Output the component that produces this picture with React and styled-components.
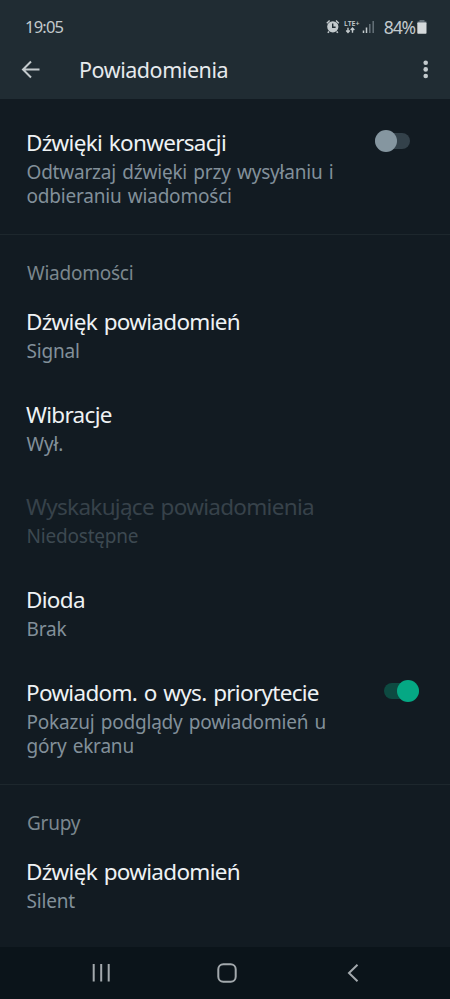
import styled, { createGlobalStyle } from "styled-components";

const GlobalStyle = createGlobalStyle`
  body {
    margin: 0;
    background-color: #121b22;
    font-family: "Noto Sans", sans-serif;
  }
`;

const Screen = styled.div`
  width: 450px;
  height: 999px;
  display: flex;
  flex-direction: column;
  overflow: hidden;
  background-color: #121b22;
`;

const Header = styled.div`
  height: 99px;
  background-color: #202c33;
`;

const StatusBar = styled.div`
  display: flex;
  align-items: center;
  height: 41px;
  padding: 13px 23px 0 25px;
  box-sizing: border-box;
  color: #c3cacd;
`;

const Clock = styled.div`
  flex: 1;
  font-size: 16.5px;
  line-height: 28px;
  letter-spacing: -0.8px;
`;

const Battery = styled.div`
  margin-left: 8px;
  margin-right: 2px;
  font-size: 17.5px;
  line-height: 28px;
  letter-spacing: -1.1px;
`;

const Toolbar = styled.div`
  display: flex;
  align-items: center;
  height: 58px;
  padding: 0 16px 0 20px;
`;

const PageTitle = styled.div`
  flex: 1;
  padding-left: 36px;
  color: #e6eaed;
  font-size: 21.5px;
  line-height: 30px;
  letter-spacing: -0.45px;
`;

const Content = styled.div`
  flex: 1;
`;

const Section = styled.div`
  padding-top: ${(props) => (props.$first ? "10px" : "0")};
  padding-bottom: 8px;
  border-bottom: 1px solid #1d272d;
`;

const SectionTitle = styled.div`
  padding: 26px 27px 3px;
  color: #7b878e;
  font-size: 19px;
  line-height: 24px;
  letter-spacing: -0.25px;
`;

const Item = styled.div`
  display: flex;
  justify-content: space-between;
  padding: 19px 27px 17.8px 26px;
`;

const ItemTitle = styled.div`
  color: ${(props) => (props.$disabled ? "#37424a" : "#eef2f4")};
  font-size: 22.5px;
  line-height: 30px;
  letter-spacing: -0.7px;
  word-spacing: 1.5px;
  white-space: nowrap;
`;

const ItemText = styled.div`
  margin-top: 2px;
  padding-left: 0.5px;
  color: ${(props) => (props.$disabled ? "#3d4951" : "#82909a")};
  font-size: 19px;
  line-height: 24px;
  letter-spacing: -0.2px;
  word-spacing: 1.5px;
  white-space: nowrap;
`;

const Switch = styled.div`
  display: flex;
  align-items: center;
  justify-content: ${(props) => (props.$on ? "flex-end" : "flex-start")};
  width: 35px;
  height: 16px;
  margin-top: 5px;
  margin-right: ${(props) => (props.$on ? "4px" : "13px")};
  border-radius: 8px;
  background-color: ${(props) => (props.$on ? "#0d4a41" : "#33414a")};
`;

const Knob = styled.div`
  flex-shrink: 0;
  width: 22px;
  height: 22px;
  border-radius: 50%;
  background-color: ${(props) => (props.$on ? "#05a884" : "#8596a0")};
`;

const NavBar = styled.div`
  display: flex;
  align-items: center;
  height: 52px;
  background-color: #0b141a;
`;

function StatusIcons() {
  return (
    <svg width="50" height="16" viewBox="0 0 50 16">
      <g fill="none" stroke="#c3cacd">
        <path d="M0.8 4.2L3.6 1.4M10 1.4L12.8 4.2" strokeWidth="1.4" />
        <path d="M3 12.5L1.8 13.8M10.6 12.5L11.8 13.8" strokeWidth="1.6" />
      </g>
      <circle cx="6.8" cy="7.8" r="5.6" fill="#c3cacd" />
      <path
        d="M6.7 4.6V8.3H9.6"
        fill="none"
        stroke="#202c33"
        strokeWidth="1.4"
      />
      <text
        x="18"
        y="6.5"
        fill="#c3cacd"
        fontSize="7.2"
        fontWeight="600"
        textLength="15.5"
        lengthAdjust="spacingAndGlyphs"
      >
        LTE+
      </text>
      <path
        d="M22 8.8V13.4M20.2 11.6L22 13.5L23.8 11.6M26.5 13.8V9.2M24.7 11L26.5 9.1L28.3 11"
        fill="none"
        stroke="#c3cacd"
        strokeWidth="1.4"
      />
      <path d="M37.5 11.5V14M40.5 8.5V14" stroke="#c3cacd" strokeWidth="1.5" />
      <path
        d="M43.8 5V14M47.2 2V14"
        stroke="#66727a"
        strokeWidth="1.5"
      />
    </svg>
  );
}

function Toggle({ on }) {
  return (
    <Switch $on={on}>
      <Knob $on={on} />
    </Switch>
  );
}

function Setting({ title, text, disabled, children }) {
  return (
    <Item>
      <div>
        <ItemTitle $disabled={disabled}>{title}</ItemTitle>
        <ItemText $disabled={disabled}>{text}</ItemText>
      </div>
      {children}
    </Item>
  );
}

export default function App() {
  return (
    <Screen>
      <GlobalStyle />
      <Header>
        <StatusBar>
          <Clock>19:05</Clock>
          <StatusIcons />
          <Battery>84%</Battery>
          <svg width="10" height="14" viewBox="0 0 10 14">
            <path d="M2.5 0H7.5V1.5H9.5V3H0.5V1.5H2.5Z" fill="#66727a" />
            <rect x="0.3" y="2.5" width="9.2" height="11.2" rx="0.8" fill="#d5dadc" />
          </svg>
        </StatusBar>
        <Toolbar>
          <svg width="23" height="20" viewBox="0 0 23 20">
            <path
              d="M19.5 9.5H3M11 1.5L3 9.5L11 17.5"
              fill="none"
              stroke="#c3cacd"
              strokeWidth="2"
            />
          </svg>
          <PageTitle>Powiadomienia</PageTitle>
          <svg width="18" height="20" viewBox="0 0 18 20" fill="#c3cacd">
            <circle cx="9.7" cy="2.8" r="2.3" />
            <circle cx="9.7" cy="9.4" r="2.3" />
            <circle cx="9.7" cy="16" r="2.3" />
          </svg>
        </Toolbar>
      </Header>

      <Content>
        <Section $first>
          <Setting
            title="Dźwięki konwersacji"
            text={
              <>
                Odtwarzaj dźwięki przy wysyłaniu i<br />
                odbieraniu wiadomości
              </>
            }
          >
            <Toggle />
          </Setting>
        </Section>

        <Section>
          <SectionTitle>Wiadomości</SectionTitle>
          <Setting title="Dźwięk powiadomień" text="Signal" />
          <Setting title="Wibracje" text="Wył." />
          <Setting
            title="Wyskakujące powiadomienia"
            text="Niedostępne"
            disabled
          />
          <Setting title="Dioda" text="Brak" />
          <Setting
            title="Powiadom. o wys. priorytecie"
            text={
              <>
                Pokazuj podglądy powiadomień u<br />
                góry ekranu
              </>
            }
          >
            <Toggle on />
          </Setting>
        </Section>

        <SectionTitle>Grupy</SectionTitle>
        <Setting title="Dźwięk powiadomień" text="Silent" />
      </Content>

      <NavBar>
        <svg width="450" height="52" viewBox="0 0 450 52" fill="none" stroke="#a3a9ad" strokeWidth="2">
          <path d="M93.7 17V34.5M101.2 17V34.5M108.7 17V34.5" />
          <rect x="218.3" y="17.3" width="17.4" height="17.4" rx="5" />
          <path d="M357.5 17.8L349 26L357.5 34.2" />
        </svg>
      </NavBar>
    </Screen>
  );
}
